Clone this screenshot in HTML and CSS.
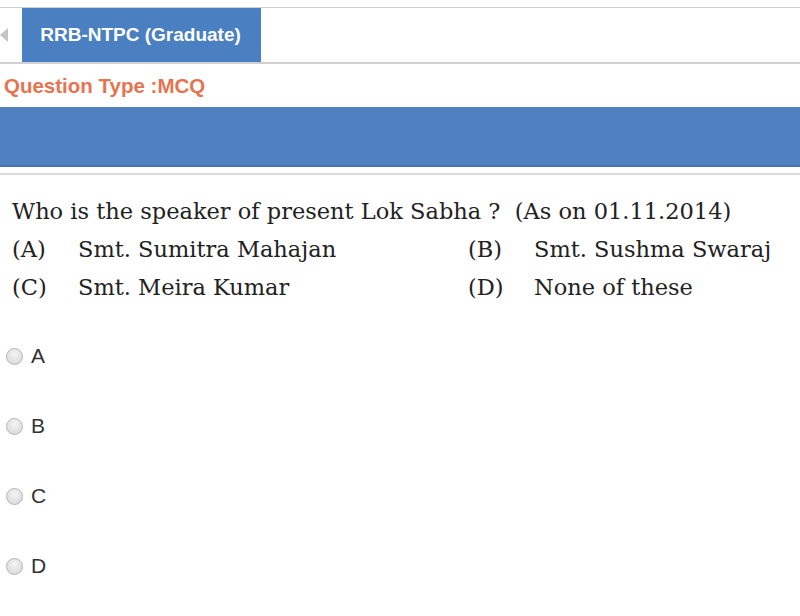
FILE: index.html
```html
<!DOCTYPE html>
<html lang="en">
<head>
    <meta charset="UTF-8">
    <title>RRB-NTPC (Graduate)</title>
    <link rel="stylesheet" href="styles.css">
</head>
<body>
    <div class="tab-strip">
        <span class="scroll-left"></span>
        <div class="tab">RRB-NTPC (Graduate)</div>
    </div>

    <div class="question-type">Question Type :MCQ</div>

    <div class="banner"></div>

    <div class="question">
        <p class="stem">Who is the speaker of present Lok Sabha ?&nbsp; (As on 01.11.2014)</p>
        <div class="choices">
            <div class="choice"><span class="key">(A)</span>Smt. Sumitra Mahajan</div>
            <div class="choice"><span class="key">(B)</span>Smt. Sushma Swaraj</div>
            <div class="choice"><span class="key">(C)</span>Smt. Meira Kumar</div>
            <div class="choice"><span class="key">(D)</span>None of these</div>
        </div>
    </div>

    <div class="options">
        <label class="option"><input type="radio" name="answer"><span>A</span></label>
        <label class="option"><input type="radio" name="answer"><span>B</span></label>
        <label class="option"><input type="radio" name="answer"><span>C</span></label>
        <label class="option"><input type="radio" name="answer"><span>D</span></label>
    </div>
</body>
</html>
```

FILE: styles.css
```css
:root {
    --tab-blue: #4a7fc1;
    --banner-blue: #4f81c0;
    --line-color: #d0d0d0;
    --accent: #e57451;
}

* {
    box-sizing: border-box;
    margin: 0;
    padding: 0;
}

body {
    font-family: "Liberation Sans", Arial, sans-serif;
    background: #ffffff;
    color: #333333;
    padding-top: 7px;
    overflow: hidden;
}

.tab-strip {
    display: flex;
    align-items: center;
    height: 57px;
    border-top: 1px solid var(--line-color);
    border-bottom: 2px solid var(--line-color);
    padding-left: 22px;
    position: relative;
}

.scroll-left {
    position: absolute;
    left: 0;
    top: 20px;
    width: 0;
    height: 0;
    border-top: 7px solid transparent;
    border-bottom: 7px solid transparent;
    border-right: 8px solid #c4c4c4;
}

.tab {
    align-self: stretch;
    width: 239px;
    background: var(--tab-blue);
    color: #ffffff;
    font-weight: bold;
    font-size: 19px;
    display: flex;
    align-items: center;
    justify-content: center;
    padding-right: 2px;
}

.question-type {
    color: var(--accent);
    font-weight: bold;
    font-size: 20.5px;
    padding: 10px 0 0 4px;
    height: 43px;
}

.banner {
    height: 60px;
    background: var(--banner-blue);
    border-bottom: 2px solid #4572aa;
    margin-bottom: 6px;
}

.question {
    border-top: 2px solid #dcdcdc;
    padding: 17px 0 0 12px;
    font-family: "DejaVu Serif", "Liberation Serif", serif;
    font-size: 22.5px;
    color: #222222;
    line-height: 38px;
}

.choices {
    display: grid;
    grid-template-columns: 456px 1fr;
}

.choice .key {
    display: inline-block;
    width: 66px;
}

.options {
    display: flex;
    flex-direction: column;
    gap: 46px;
    padding: 38px 0 0 6px;
}

.option {
    display: flex;
    align-items: center;
    gap: 8px;
    font-size: 21px;
    color: #333333;
    height: 24px;
}

.option input {
    appearance: none;
    width: 17px;
    height: 17px;
    border-radius: 50%;
    border: 1px solid #b5b5b5;
    background: radial-gradient(circle at 50% 35%, #f4f4f4, #d4d4d4);
    margin: 0;
}
```
